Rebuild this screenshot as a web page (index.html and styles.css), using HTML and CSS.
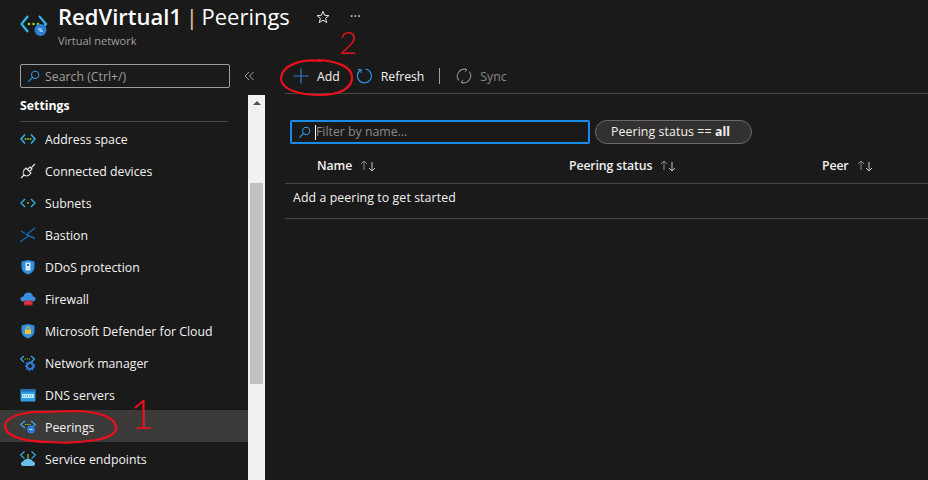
FILE: index.html
```html
<!DOCTYPE html>
<html lang="en">

<head>
    <meta charset="UTF-8" />
    <title>RedVirtual1 | Peerings</title>
    <link rel="stylesheet" href="styles.css">
</head>

<body>
    <svg class="defs" width="0" height="0">
        <defs>
            <symbol id="vnet" viewBox="0 0 16 16">
                <path d="M5 3.500 1 8l4 4.500" fill="none" stroke="#32b0e7" stroke-width="1.600" />
                <path d="M11 3.500 15 8l-4 4.500" fill="none" stroke="#32b0e7" stroke-width="1.600" />
                <circle cx="5.500" cy="8" r=".9" fill="#86d633" />
                <circle cx="8" cy="8" r=".9" fill="#86d633" />
                <circle cx="10.500" cy="8" r=".9" fill="#86d633" />
            </symbol>
            <symbol id="sort" viewBox="0 0 16 12">
                <path d="M4 10V1M1 4l3-3 3 3" fill="none" stroke="#8a8886" />
                <path d="M12 2v9M9 8l3 3 3-3" fill="none" stroke="#c8c6c4" />
            </symbol>
        </defs>
    </svg>

    <header class="header">
        <svg class="header-icon" viewBox="0 0 28 24">
            <path d="M8 3 1.500 11 8 19" fill="none" stroke="#35b5ee" stroke-width="2.200" />
            <path d="M19 3 26 11 19 19" fill="none" stroke="#35b5ee" stroke-width="2.200" />
            <circle cx="9" cy="11" r="1.300" fill="#86d633" />
            <circle cx="13.500" cy="11" r="1.300" fill="#86d633" />
            <circle cx="18" cy="11" r="1.300" fill="#86d633" />
            <circle cx="20.500" cy="17" r="6" fill="#2b7cd3" />
            <path d="M18 16h3.500M23 18h-3.500" stroke="#fff" stroke-width="1" />
        </svg>
        <div class="titles">
            <h1 class="title">RedVirtual1 <span class="title-rest"><span class="title-bar">|</span> Peerings</span></h1>
            <div class="subtitle">Virtual network</div>
        </div>
        <svg class="star" viewBox="0 0 14 14">
            <path d="M7 1.300 8.600 5.300 12.900 5.600 9.600 8.300 10.700 12.500 7 10.200 3.300 12.500 4.400 8.300 1.100 5.600 5.400 5.300Z" fill="none" stroke="#e8e8e8" />
        </svg>
        <span class="more">···</span>
    </header>

    <div class="main">
        <aside class="side">
            <div class="side-top">
                <div class="search">
                    <svg class="lens" viewBox="0 0 14 14">
                        <circle cx="8.800" cy="5.200" r="3.900" fill="none" stroke="#2f9be8" stroke-width="1.100" />
                        <path d="M6 8 1.500 12.500" stroke="#2f9be8" stroke-width="1.300" />
                    </svg>
                    <span>Search (Ctrl+/)</span>
                </div>
                <svg class="collapse" viewBox="0 0 10 10">
                    <path d="M5 1 1 5l4 4M9.500 1l-4 4 4 4" fill="none" stroke="#a19f9d" />
                </svg>
            </div>
            <div class="side-body">
                <nav class="menu">
                    <div class="menu-head">Settings</div>
                    <a class="item">
                        <svg class="ico" viewBox="0 0 16 16"><use href="#vnet" /></svg>
                        Address space
                    </a>
                    <a class="item">
                        <svg class="ico" viewBox="0 0 16 16">
                            <path d="M1 15 4.500 11.500M15 1 11.500 4.500M6 5 11 10 9 12C7.500 13 5 13 4 12S3 8.500 4 7ZM7.500 6.500 10 4l2 2-2.500 2.500M4 7" fill="none" stroke="#e6e6e6" stroke-width="1.100" />
                        </svg>
                        Connected devices
                    </a>
                    <a class="item">
                        <svg class="ico" viewBox="0 0 16 16">
                            <path d="M5 4 1 8l4 4M11 4l4 4-4 4" fill="none" stroke="#32a5de" stroke-width="1.500" />
                            <circle cx="8" cy="8" r=".9" fill="#86d633" />
                        </svg>
                        Subnets
                    </a>
                    <a class="item">
                        <svg class="ico" viewBox="0 0 16 16">
                            <path d="M0 15 9 8.500M15 1 6.500 7.500 15 11.500M1 4 5 6.500" fill="none" stroke="#0f6cbd" stroke-width="1.400" />
                        </svg>
                        Bastion
                    </a>
                    <a class="item">
                        <svg class="ico" viewBox="0 0 16 16">
                            <path d="M8 1 14.500 2.500V8C14.500 12 11 14.500 8 15.500 5 14.500 1.500 12 1.500 8V2.500Z" fill="#2f8fe0" />
                            <rect x="5.500" y="3.500" width="5" height="8" rx=".5" fill="#dcecf9" />
                            <rect x="7" y="5" width="2" height="2" fill="#2f6fb0" />
                        </svg>
                        DDoS protection
                    </a>
                    <a class="item">
                        <svg class="ico" viewBox="0 0 16 16">
                            <path d="M3.500 10.500C1 10.500 0 9 .5 7.500S2.500 5.500 3.500 5.500C4 3 6 1.500 8.500 1.500S13 3.500 13 5.500C15 5.500 16 7 15.500 8.500S14 10.500 12.500 10.500Z" fill="#3a8ee0" />
                            <rect x="4" y="9.500" width="8.500" height="5" fill="#c8202c" />
                            <path d="M4 12h8.500M8 9.500V12" stroke="#f06a70" stroke-width=".6" />
                        </svg>
                        Firewall
                    </a>
                    <a class="item">
                        <svg class="ico" viewBox="0 0 16 16">
                            <path d="M8 1 14.500 2.500V8C14.500 12 11 14.500 8 15.500 5 14.500 1.500 12 1.500 8V2.500Z" fill="#2f8fe0" />
                            <rect x="5" y="6.500" width="6" height="4.500" fill="#f2c230" />
                            <path d="M6.200 6.500V5.200C6.200 3.300 9.800 3.300 9.800 5.200V6.500" fill="none" stroke="#f2c230" stroke-width="1" />
                        </svg>
                        Microsoft Defender for Cloud
                    </a>
                    <a class="item">
                        <svg class="ico" viewBox="0 0 16 16">
                            <path d="M4 1 .5 4 4 7M11 1l3.500 3L11 7" fill="none" stroke="#32b0e7" stroke-width="1.200" />
                            <path d="M4.500 4h6" stroke="#86d633" stroke-width="1.100" stroke-dasharray="1.200 1" />
                            <circle cx="10" cy="11" r="3" fill="none" stroke="#2b7cd3" stroke-width="2" />
                            <circle cx="10" cy="11" r="4.500" fill="none" stroke="#2b7cd3" stroke-width="1.200" stroke-dasharray="1.600 1.600" />
                        </svg>
                        Network manager
                    </a>
                    <a class="item">
                        <svg class="ico" viewBox="0 0 16 16">
                            <rect x=".5" y="2" width="15" height="12.500" rx="1" fill="#2f9ee0" />
                            <rect x=".5" y="2" width="15" height="2.500" fill="#1d6db3" />
                            <rect x="2" y="7" width="12" height="4" fill="#bfe6fa" />
                            <path d="M3 9h10" stroke="#2f9ee0" stroke-dasharray="1 1" />
                        </svg>
                        DNS servers
                    </a>
                    <a class="item current">
                        <svg class="ico" viewBox="0 0 16 16">
                            <path d="M5 2 .5 5.500 5 9M11 2l4.500 3.500L11 9" fill="none" stroke="#32b0e7" stroke-width="1.200" />
                            <path d="M5 5.500h6" stroke="#86d633" stroke-width="1.100" stroke-dasharray="1.200 1" />
                            <circle cx="11" cy="10.500" r="4" fill="#2b7cd3" />
                            <path d="M9.500 10.500h3" stroke="#cfe4f7" />
                        </svg>
                        Peerings
                    </a>
                    <a class="item">
                        <svg class="ico" viewBox="0 0 16 16">
                            <path d="M4.500 .5 .5 4 4.500 7.500M11.500 .5l4 3.500-4 3.500" fill="none" stroke="#32b0e7" stroke-width="1.200" />
                            <path d="M8 3V9" stroke="#86d633" stroke-width="1.200" />
                            <path d="M3 15C.5 15 0 11 3 10.500 4 8.500 6 8 8 8s4 .5 5 2.500C16 11 15.500 15 13 15Z" fill="#69bfe8" />
                        </svg>
                        Service endpoints
                    </a>
                </nav>
                <div class="scroll">
                    <div class="scroll-up"></div>
                    <div class="scroll-thumb"></div>
                </div>
            </div>
        </aside>

        <main class="content">
            <div class="toolbar">
                <button class="tool">
                    <svg class="tool-ico" viewBox="0 0 16 16"><path d="M8 .5v15M.5 8h15" stroke="#2d7fc9" stroke-width="1.200" /></svg>
                    Add
                </button>
                <button class="tool tool-refresh">
                    <svg class="tool-ico" viewBox="0 0 16 16">
                        <path d="M5 1.800A7 7 0 1 0 9.500 1" fill="none" stroke="#2f9be8" stroke-width="1.100" />
                        <path d="M1.800 1.500 5.200 1.700 5 5" fill="none" stroke="#2f9be8" stroke-width="1" />
                    </svg>
                    Refresh
                </button>
                <span class="tool-sep"></span>
                <button class="tool off">
                    <svg class="tool-ico" viewBox="0 0 16 16">
                        <path d="M3 12.500A6.800 6.800 0 0 1 10.500 1.700M13 3.500A6.800 6.800 0 0 1 5.500 14.300" fill="none" stroke="#8a8886" stroke-width="1.100" />
                        <path d="M9 .5 11 2 9 4M7 12l-2 2 2 1.700" fill="none" stroke="#8a8886" />
                    </svg>
                    Sync
                </button>
            </div>

            <div class="filters">
                <div class="filter">
                    <svg class="lens" viewBox="0 0 14 14">
                        <circle cx="8.800" cy="5.200" r="3.900" fill="none" stroke="#2f9be8" stroke-width="1.100" />
                        <path d="M6 8 1.500 12.500" stroke="#2f9be8" stroke-width="1.300" />
                    </svg>
                    <span class="caret"></span>
                    <span class="filter-text">Filter by name...</span>
                </div>
                <div class="pill">Peering status == <b>all</b></div>
            </div>

            <div class="thead">
                <div class="th th-name">Name <svg class="sort"><use href="#sort" /></svg></div>
                <div class="th th-status">Peering status <svg class="sort"><use href="#sort" /></svg></div>
                <div class="th">Peer <svg class="sort"><use href="#sort" /></svg></div>
            </div>
            <div class="empty">Add a peering to get started</div>
        </main>
    </div>

    <!-- red marker notes drawn on top of the screenshot -->
    <svg class="ink" viewBox="0 0 928 480">
        <path d="M48 412C30 411 8 414 5 425 4 436 24 442 50 442 80 444 112 440 116 430 118 418 100 411 72 411L46 412" />
        <path d="M322 61C300 58 282 66 281 78 281 90 300 95 320 95 340 95 353 88 352 76 351 66 335 61 318 60" />
    </svg>
    <span class="note note-one">1</span>
    <span class="note note-two">2</span>
</body>

</html>
```

FILE: styles.css
```css
* {
    box-sizing: border-box;
}

html,
body {
    height: 480px;
}

body {
    margin: 0;
    overflow: hidden;
    position: relative;
    background: #1a1a1a;
    color: #f3f2f1;
    font-family: "Open Sans", "Noto Sans", sans-serif;
    font-size: 12.3px;
}

.defs {
    display: block;
    height: 0;
}

/* page header */
.header {
    height: 60px;
    padding: 2px 0 0 20px;
    display: flex;
    align-items: flex-start;
}

.header-icon {
    width: 28px;
    height: 24px;
    margin: 11px 10px 0 0;
}

.title {
    margin: 0;
    font-size: 22px;
    font-weight: 600;
    line-height: 28px;
    word-spacing: -2px;
    color: #fff;
    white-space: nowrap;
}

.title-rest {
    font-weight: 400;
}

.title-bar {
    color: #e8c79a;
}

.subtitle {
    font-size: 11px;
    line-height: 16px;
    margin-top: 3px;
    color: #a19f9d;
}

.star {
    width: 14px;
    height: 14px;
    margin: 8px 0 0 26px;
}

.more {
    margin: 7px 0 0 20px;
    font-size: 14px;
    line-height: 14px;
    color: #d0d0d0;
}

/* left menu */
.main {
    display: flex;
    height: 420px;
}

.side {
    width: 265px;
    flex: none;
}

.side-top {
    height: 35px;
    padding: 4px 0 0 20px;
    display: flex;
}

.search {
    width: 210px;
    height: 24px;
    padding-left: 6px;
    display: flex;
    align-items: center;
    gap: 5px;
    border: 1px solid #a19f9d;
    border-radius: 2px;
    color: #a19f9d;
}

.lens {
    width: 13px;
    height: 13px;
    flex: none;
}

.collapse {
    width: 10px;
    height: 10px;
    margin: 7px 0 0 14px;
}

.side-body {
    display: flex;
    height: 385px;
}

.menu {
    width: 248px;
    flex: none;
}

.menu-head {
    height: 27px;
    margin: 0 20px;
    border-bottom: 1px solid #484644;
    font-weight: 700;
    line-height: 21px;
    color: #fff;
}

.item {
    height: 32px;
    padding: 2px 0 0 20px;
    display: flex;
    align-items: center;
    gap: 9px;
}

.current {
    background: #3b3a39;
}

.ico {
    width: 16px;
    height: 16px;
    flex: none;
}

.scroll {
    width: 17px;
    background: #f1f1f1;
}

.scroll-up {
    height: 17px;
    padding-top: 6px;
}

.scroll-up::after {
    content: "";
    display: block;
    width: 0;
    margin: 0 auto;
    border: 4px solid transparent;
    border-top: 0;
    border-bottom: 4px solid #505050;
}

.scroll-thumb {
    height: 201px;
    margin: 71px 2px 0;
    background: #c1c1c1;
}

/* right side */
.content {
    flex: 1;
    padding-left: 20px;
    min-width: 0;
}

.toolbar {
    height: 34px;
    padding: 0 0 1px 8px;
    display: flex;
    align-items: center;
    border-bottom: 1px solid #484644;
}

.tool {
    padding: 0;
    margin-right: 16px;
    display: flex;
    align-items: center;
    gap: 8px;
    background: none;
    border: 0;
    font: inherit;
    color: #f3f2f1;
}

.tool-refresh {
    gap: 9px;
    letter-spacing: -.08px;
    margin-right: 15px;
}

.tool-ico {
    width: 16px;
    height: 16px;
}

.tool-sep {
    width: 1px;
    height: 16px;
    background: #a19f9d;
    margin: 0 16px 0 0;
}

.off {
    color: #8a8886;
}

.filters {
    margin: 26px 0 0 5px;
    display: flex;
    gap: 5px;
}

.filter {
    width: 300px;
    height: 24px;
    padding-left: 6px;
    display: flex;
    align-items: center;
    border: 2px solid #1b8ae4;
    border-radius: 2px;
    color: #8a8886;
}

.filter-text {
    margin-top: -2px;
}

.caret {
    width: 1px;
    height: 15px;
    margin: 0 0 0 4px;
    background: #fff;
}

.pill {
    width: 157px;
    height: 24px;
    padding-left: 15px;
    border: 1px solid #6b6a68;
    border-radius: 12px;
    background: #323130;
    line-height: 22px;
    letter-spacing: .1px;
    white-space: nowrap;
}

.thead {
    height: 40px;
    padding: 4px 0 0 32px;
    display: flex;
    align-items: center;
    border-bottom: 1px solid #484644;
    font-weight: 600;
    letter-spacing: -.12px;
    color: #f3f2f1;
}

.th {
    display: flex;
    align-items: center;
    white-space: nowrap;
}

.th-name {
    width: 252px;
}

.th-status {
    width: 253px;
}

.sort {
    width: 16px;
    height: 12px;
    margin-left: 8px;
}

.empty {
    height: 35px;
    padding: 5px 0 0 8px;
    line-height: 17px;
    letter-spacing: .1px;
    border-bottom: 1px solid #484644;
}

/* red notes over the page */
.ink {
    position: absolute;
    left: 0;
    top: 0;
    width: 928px;
    height: 480px;
    fill: none;
    stroke: #e8101c;
    stroke-width: 2.200;
}

.note {
    position: absolute;
    font-family: "Lato", sans-serif;
    font-weight: 300;
    color: #e8101c;
    line-height: .8;
}

.note-one {
    left: 130px;
    top: 398px;
    font-size: 41px;
}

.note-two {
    left: 339px;
    top: 30px;
    font-size: 31px;
}
```
